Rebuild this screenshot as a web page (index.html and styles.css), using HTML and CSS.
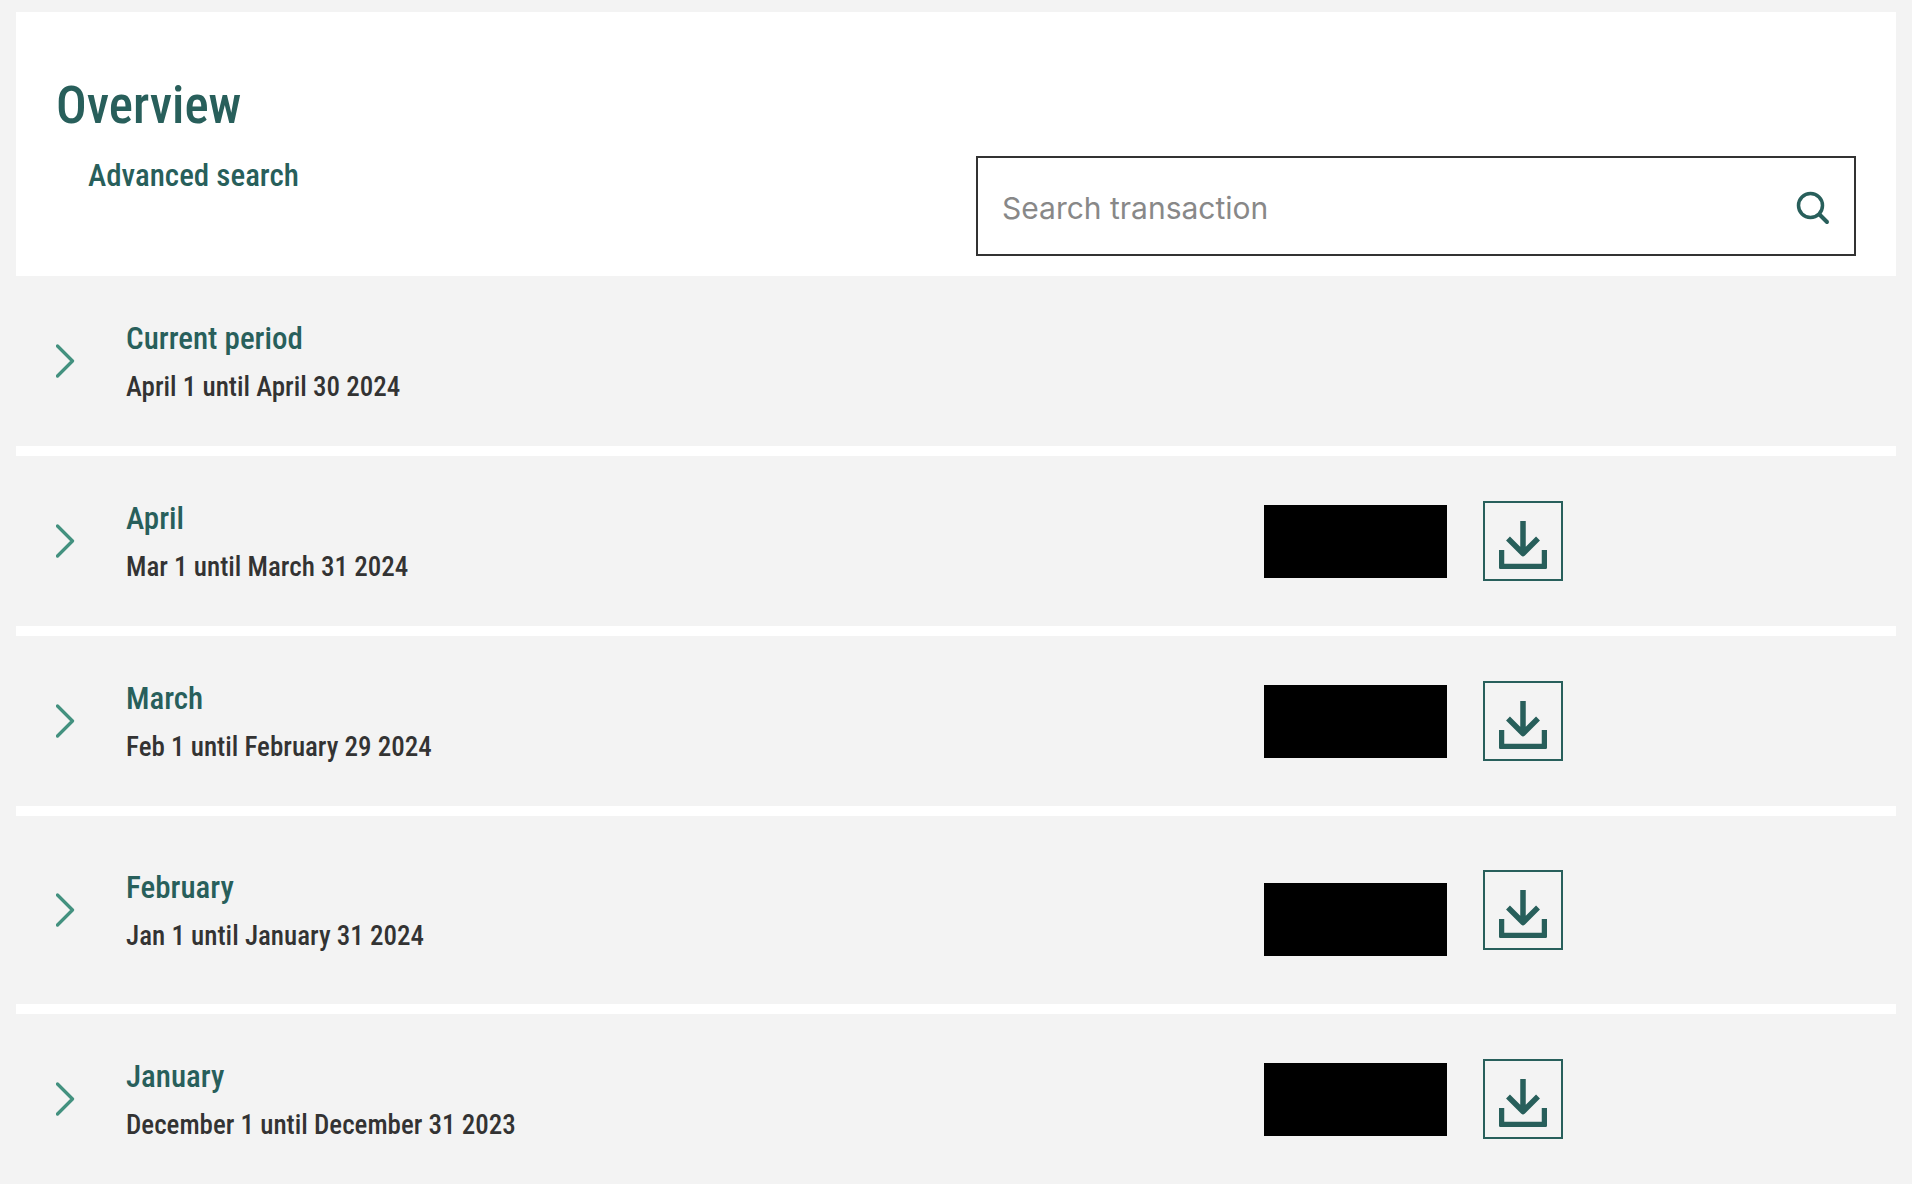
FILE: index.html
```html
<!DOCTYPE html>
<html lang="en">
  <head>
    <meta charset="UTF-8" />
    <meta name="viewport" content="width=device-width, initial-scale=1.0" />
    <title>Overview</title>
    <link rel="stylesheet" href="styles.css">
  </head>
  <body>
    <svg class="sprite" aria-hidden="true">
      <symbol id="chevron" viewBox="0 0 20 34">
        <path d="M1.500 2 L16.500 17 L1.500 32" fill="none" stroke="currentColor" stroke-width="3.300" stroke-linecap="round" stroke-linejoin="round" />
      </symbol>
      <symbol id="download" viewBox="0 0 48 48">
        <path d="M24 0 V32 M9 17.500 L24 32.500 L39 17.500 M2.500 29 V45.500 H45.500 V29" fill="none" stroke="currentColor" stroke-width="5.500" stroke-linejoin="round" />
      </symbol>
    </svg>

    <main class="page">
      <header class="header">
        <h1 class="title">Overview</h1>
        <div class="toolbar">
          <a class="advanced" href="#advanced">Advanced search</a>
          <form class="search" role="search">
            <input class="search-input" type="text" placeholder="Search transaction" aria-label="Search transaction" />
            <button class="search-button" type="button" aria-label="Search">
              <svg width="34" height="34" viewBox="0 0 34 34" fill="none" stroke="currentColor" stroke-linecap="round">
                <circle cx="14.500" cy="14.500" r="12" stroke-width="3.500" />
                <path d="M23.500 23.500 L31 31" stroke-width="4" />
              </svg>
            </button>
          </form>
        </div>
      </header>

      <ul class="periods">
        <li class="period">
          <button class="toggle" type="button" aria-label="Show current period"><svg><use href="#chevron" /></svg></button>
          <div class="info">
            <h2 class="name">Current period</h2>
            <p class="range">April 1 until April 30 2024</p>
          </div>
        </li>
        <li class="period">
          <button class="toggle" type="button" aria-label="Show April"><svg><use href="#chevron" /></svg></button>
          <div class="info">
            <h2 class="name">April</h2>
            <p class="range">Mar 1 until March 31 2024</p>
          </div>
          <div class="amount"><span class="hidden-value"></span></div>
          <button class="download" type="button" aria-label="Download April"><svg><use href="#download" /></svg></button>
        </li>
        <li class="period">
          <button class="toggle" type="button" aria-label="Show March"><svg><use href="#chevron" /></svg></button>
          <div class="info">
            <h2 class="name">March</h2>
            <p class="range">Feb 1 until February 29 2024</p>
          </div>
          <div class="amount"><span class="hidden-value"></span></div>
          <button class="download" type="button" aria-label="Download March"><svg><use href="#download" /></svg></button>
        </li>
        <li class="period period-tall">
          <button class="toggle" type="button" aria-label="Show February"><svg><use href="#chevron" /></svg></button>
          <div class="info">
            <h2 class="name">February</h2>
            <p class="range">Jan 1 until January 31 2024</p>
          </div>
          <div class="amount"><span class="hidden-value"></span></div>
          <button class="download" type="button" aria-label="Download February"><svg><use href="#download" /></svg></button>
        </li>
        <li class="period">
          <button class="toggle" type="button" aria-label="Show January"><svg><use href="#chevron" /></svg></button>
          <div class="info">
            <h2 class="name">January</h2>
            <p class="range">December 1 until December 31 2023</p>
          </div>
          <div class="amount"><span class="hidden-value"></span></div>
          <button class="download" type="button" aria-label="Download January"><svg><use href="#download" /></svg></button>
        </li>
      </ul>
    </main>
  </body>
</html>
```
FILE: styles.css
```css
:root {
  --green: #285f5b;
  --green-light: #43917f;
  --text: #333;
  --grey: #f3f3f3;
}

* {
  box-sizing: border-box;
  margin: 0;
  padding: 0;
}

body {
  background: var(--grey);
  color: var(--text);
  font-family: "Roboto Condensed", "Liberation Sans Narrow", Roboto, sans-serif;
  font-weight: 500;
}

button {
  background: none;
  border: none;
  color: var(--green);
  cursor: pointer;
}

svg {
  display: block;
}

.sprite {
  display: none;
}

.page {
  padding: 12px 16px 0;
}

.header {
  background: white;
  padding: 62px 40px 20px;
}

.title {
  color: var(--green);
  font-size: 51px;
  font-weight: 500;
  line-height: 64px;
}

.toolbar {
  display: flex;
  justify-content: space-between;
  align-items: flex-start;
  gap: 40px;
  padding-top: 18px;
}

.advanced {
  padding-left: 32px;
  color: var(--green);
  font-size: 31px;
  line-height: 40px;
  text-decoration: none;
}

.search {
  display: flex;
  align-items: center;
  flex: 0 1 880px;
  height: 100px;
  padding: 4px 24px 0;
  border: 2px solid var(--text);
}

.search-input {
  flex: 1;
  min-width: 0;
  height: 92px;
  border: none;
  outline: none;
  background: none;
  color: var(--text);
  font-family: Inter, sans-serif;
  font-size: 30px;
}

.search-input::placeholder {
  color: #888;
}

.periods {
  list-style: none;
}

.period {
  display: flex;
  align-items: center;
  min-height: 170px;
  padding: 0 40px;
}

.period + .period {
  border-top: 10px solid white;
  min-height: 180px;
}

.period + .period-tall {
  min-height: 198px;
}

.toggle {
  width: 70px;
  color: var(--green-light);
}

.toggle svg {
  width: 20px;
  height: 34px;
}

.info {
  flex: 1;
  padding-top: 4px;
}

.name {
  color: var(--green);
  font-size: 31px;
  font-weight: 500;
  line-height: 48px;
}

.range {
  font-size: 27px;
  line-height: 48px;
}

/* keeps the value level with the bottom part of the row */
.amount {
  display: flex;
  align-items: center;
  align-self: flex-end;
  height: 170px;
  margin-right: 36px;
}

.hidden-value {
  width: 183px;
  height: 73px;
  background: black;
}

.download {
  display: flex;
  justify-content: center;
  width: 80px;
  height: 80px;
  margin-right: 293px;
  padding-top: 18px;
  border: 2px solid var(--green);
}

.download svg {
  width: 48px;
  height: 48px;
}
```
